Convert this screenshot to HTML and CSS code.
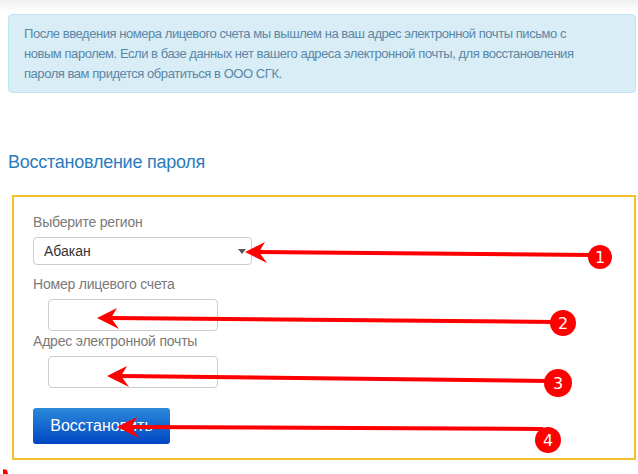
FILE: index.html
```html
<!doctype html>
<html lang="ru">
<head>
  <meta charset="UTF-8">
  <title>Восстановление пароля</title>
  <link rel="stylesheet" href="styles.css">
</head>
<body>
<div class="page-wrapper">
  <div class="alert-info">
    После введения номера лицевого счета мы вышлем на ваш адрес электронной почты письмо с<br>
    новым паролем. Если в базе данных нет вашего адреса электронной почты, для восстановления<br>
    пароля вам придется обратиться в ООО СГК.
  </div>
  <h2 class="page-title">Восстановление пароля</h2>
  <form class="restore-form">
    <label class="form-label">Выберите регион</label>
    <div class="select-wrap">
      <div class="form-select">Абакан</div>
    </div>
    <label class="form-label label-gap">Номер лицевого счета</label>
    <input class="form-input" type="text">
    <label class="form-label">Адрес электронной почты</label>
    <input class="form-input" type="text">
    <button class="btn-restore" type="button">Восстановить</button>
  </form>
</div>

<svg class="marks" width="638" height="474" viewBox="0 0 638 474">
  <g stroke="#ff0000" stroke-width="4" stroke-linecap="round" fill="none">
    <line x1="258" y1="252" x2="592" y2="255"/>
    <line x1="110" y1="318" x2="555" y2="322"/>
    <line x1="120" y1="376" x2="548" y2="381"/>
    <line x1="130" y1="427" x2="542" y2="429"/>
  </g>
  <g fill="#ff0000">
    <polygon points="245,252 265,242 259,252 267,263"/>
    <polygon points="97,318 117,308 111,318 119,329"/>
    <polygon points="107,376 127,366 121,376 129,387"/>
    <polygon points="117,427 137,417 131,427 139,438"/>
    <circle cx="600" cy="257" r="12"/>
    <circle cx="563" cy="323" r="13"/>
    <circle cx="558" cy="383" r="14"/>
    <circle cx="548" cy="440" r="13"/>
    <polygon points="3,469 7,470 8,474 3,474"/>
  </g>
  <g class="mark-num" fill="#ffffff" text-anchor="middle">
    <text x="600" y="263">1</text>
    <text x="563" y="329">2</text>
    <text x="558" y="389">3</text>
    <text x="548" y="446">4</text>
  </g>
</svg>
</body>
</html>
```

FILE: styles.css
```css
html, body {
  margin: 0;
  padding: 0;
}

body {
  position: relative;
  height: 474px;
  overflow: hidden;
  background: linear-gradient(180deg, #efefef, #ffffff 12px);
  font-family: "Liberation Sans", Arial, sans-serif;
}

.page-wrapper {
  padding: 14px 2px 0 8px;
}

.alert-info {
  padding: 9px 15px 8px;
  border: 1px solid #bfe5f2;
  border-radius: 4px;
  background: #d9edf7;
  color: #5b87a6;
  font-size: 13px;
  line-height: 20px;
  letter-spacing: -0.45px;
}

.page-title {
  margin: 59px 0 0;
  color: #2b7bbd;
  font-size: 18px;
  font-weight: normal;
  line-height: 20px;
  letter-spacing: -0.25px;
}

.restore-form {
  margin: 23px 0 0 4px;
  padding: 15px 19px 14px;
  border: 2px solid #f7be2b;
}

.form-label {
  display: block;
  color: #7a7a7a;
  font-size: 14px;
  line-height: 20px;
  letter-spacing: -0.2px;
}

.label-gap {
  margin-top: 9px;
}

.select-wrap {
  position: relative;
  width: 219px;
  margin-top: 5px;
}

.form-select {
  height: 26px;
  padding: 0 10px;
  border: 1px solid #cccccc;
  border-radius: 4px;
  color: #333;
  font-size: 14px;
  line-height: 26px;
}

.select-wrap:after {
  content: '';
  position: absolute;
  right: 6px;
  top: 12px;
  border-left: 4px solid transparent;
  border-right: 4px solid transparent;
  border-top: 5px solid #555;
}

.form-input {
  display: block;
  box-sizing: border-box;
  width: 170px;
  height: 32px;
  margin: 5px 0 0 15px;
  border: 1px solid #cccccc;
  border-radius: 4px;
  background: #fff;
}

.btn-restore {
  display: block;
  width: 137px;
  height: 36px;
  margin-top: 20px;
  padding: 0;
  border: 0;
  border-radius: 3px;
  background: linear-gradient(180deg, #2b8ad9, #0045c3);
  color: #fff;
  font-family: "Liberation Sans", Arial, sans-serif;
  font-size: 16px;
}

.marks {
  position: absolute;
  left: 0;
  top: 0;
}

.mark-num {
  font-family: "DejaVu Sans", sans-serif;
  font-size: 16px;
}
```
